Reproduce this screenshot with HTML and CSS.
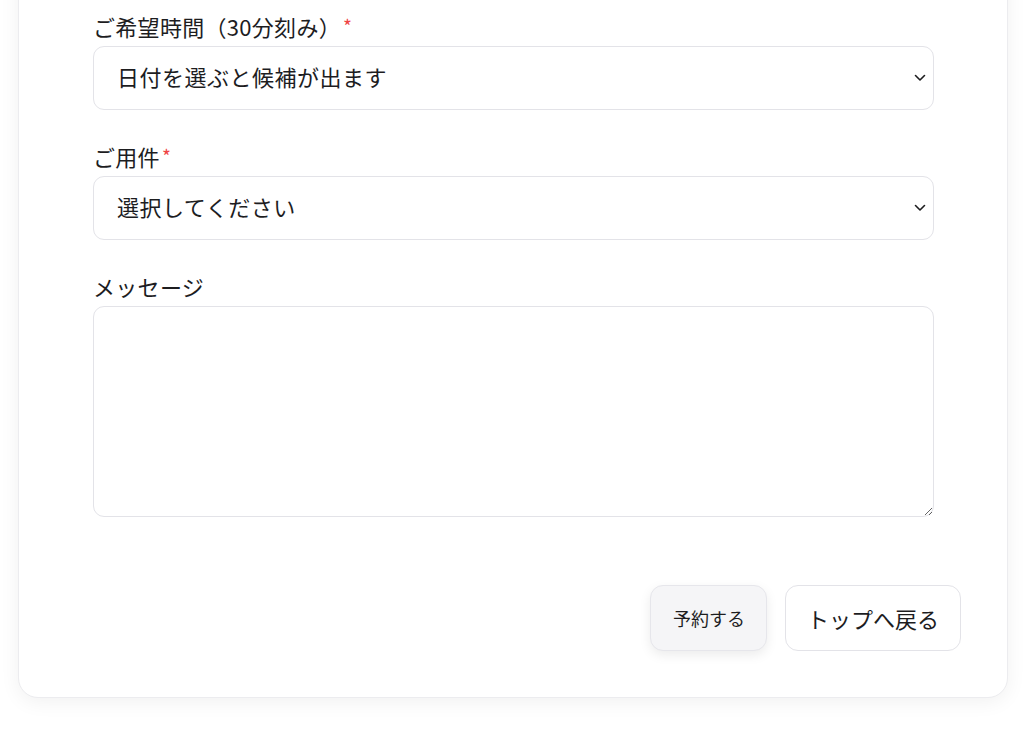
FILE: index.html
```html
<!DOCTYPE html>
<html lang="ja">
<head>
    <meta charset="UTF-8">
    <meta name="viewport" content="width=device-width, initial-scale=1.0">
    <title>ご予約</title>
    <link rel="stylesheet" href="styles.css">
</head>
<body>
    <div class="card">
        <form class="form-body">
            <div class="field">
                <label for="time">ご希望時間（30分刻み）<span class="req">*</span></label>
                <div class="select-wrap">
                    <select id="time" name="time">
                        <option>日付を選ぶと候補が出ます</option>
                    </select>
                    <svg class="chevron" width="12" height="8" viewBox="0 0 12 8"><path d="M1.5 1.5 6 6l4.5-4.5" fill="none" stroke="#1d1d1f" stroke-width="1.6" stroke-linecap="round" stroke-linejoin="round"/></svg>
                </div>
            </div>
            <div class="field">
                <label for="purpose">ご用件<span class="req">*</span></label>
                <div class="select-wrap">
                    <select id="purpose" name="purpose">
                        <option>選択してください</option>
                    </select>
                    <svg class="chevron" width="12" height="8" viewBox="0 0 12 8"><path d="M1.5 1.5 6 6l4.5-4.5" fill="none" stroke="#1d1d1f" stroke-width="1.6" stroke-linecap="round" stroke-linejoin="round"/></svg>
                </div>
            </div>
            <div class="field">
                <label for="message">メッセージ</label>
                <textarea id="message" name="message"></textarea>
            </div>
        </form>
        <div class="actions">
            <button type="submit" class="btn btn-primary">予約する</button>
            <button type="button" class="btn btn-outline">トップへ戻る</button>
        </div>
    </div>
</body>
</html>
```

FILE: styles.css
```css
body {
    margin: 0;
    padding: 0;
    background: #fff;
    color: #1d1d1f;
    font-family: "Noto Sans CJK JP", "Noto Sans", sans-serif;
}
.card {
    margin: -40px 16px 34px 18px;
    padding-top: 50px;
    background: #fff;
    border: 1px solid #ececef;
    border-radius: 20px;
    box-shadow: 0 4px 20px rgba(0, 0, 0, 0.06);
}
.form-body {
    padding: 0 73px 0 74px;
}
.field {
    margin-bottom: 31px;
}
.field label {
    display: block;
    font-size: 22px;
    line-height: 30px;
    margin-bottom: 5px;
    letter-spacing: 0.3px;
}
.req {
    color: #ef4444;
    font-size: 19px;
    margin-left: 2px;
}
.field label .req {
    vertical-align: 2px;
}
.select-wrap {
    position: relative;
}
select {
    -webkit-appearance: none;
    appearance: none;
    display: block;
    width: 100%;
    height: 64px;
    padding: 0 40px 4px 23px;
    font-family: inherit;
    font-size: 22px;
    letter-spacing: 0.5px;
    color: #1d1d1f;
    background: #fff;
    border: 1px solid #e3e3e8;
    border-radius: 11px;
}
.chevron {
    position: absolute;
    right: 8px;
    top: 28px;
}
textarea {
    display: block;
    box-sizing: border-box;
    width: 100%;
    height: 211px;
    padding: 12px 23px;
    font-family: inherit;
    font-size: 22px;
    border: 1px solid #e3e3e8;
    border-radius: 11px;
    resize: vertical;
}
.actions {
    display: flex;
    justify-content: flex-end;
    gap: 18px;
    padding: 37px 46px 46px 0;
}
.btn {
    height: 66px;
    padding: 0 21px;
    font-family: inherit;
    color: #1d1d1f;
    border-radius: 13px;
    cursor: pointer;
}
.btn-primary {
    font-size: 18px;
    padding: 0 21px 0 22px;
    background: #f5f5f7;
    border: 1px solid #e6e6eb;
    box-shadow: 0 4px 12px rgba(0, 0, 0, 0.08);
}
.btn-outline {
    font-size: 22px;
    background: #fff;
    border: 1px solid #e3e3e8;
}
```
